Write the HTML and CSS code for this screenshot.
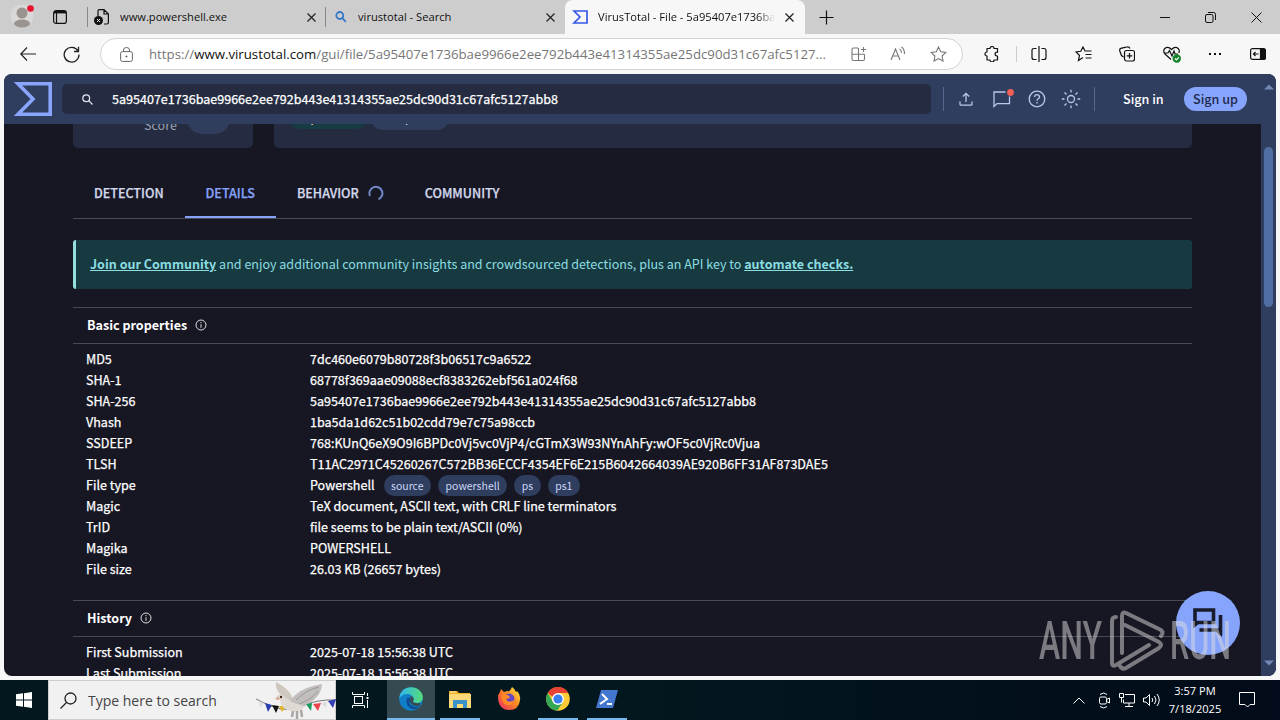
FILE: index.html
```html
<!DOCTYPE html>
<html lang="en">
<head>
<meta charset="utf-8">
<title>VirusTotal - File</title>
<link rel="stylesheet" href="styles.css">
</head>
<body>
<div class="tabbar">
  <svg class="avatar" width="24" height="24" viewBox="0 0 24 24"><circle cx="12" cy="11" r="11.500" fill="#d8d8d8"/><circle cx="12" cy="8" r="5.500" fill="#999490"/><ellipse cx="12" cy="18.500" rx="8" ry="4" fill="#999490"/><circle cx="20.500" cy="3.500" r="3.300" fill="#e8112d"/></svg>
  <svg class="workspaces" width="14" height="14" viewBox="0 0 14 14" fill="none" stroke="#111"><rect x=".6" y=".6" width="12.800" height="12.800" rx="2.500" stroke-width="1.200"/><path d="M1 2.200h12" stroke-width="2.400"/><path d="M3.500 3v10" stroke-width="1.200"/></svg>
  <i class="sep"></i>
  <div class="tab tab-one">
    <svg width="16" height="16" viewBox="0 0 16 16" fill="none"><path d="M4 7V2q0-1.400 1.400-1.400H10L14.400 5v8.500q0 1.500-1.400 1.500h-3M10 1v4h4" stroke="#111" stroke-width="1.200"/><circle cx="4.500" cy="11.500" r="4.500" fill="#111"/><path d="M3 10l3 3M6 10l-3 3" stroke="#eee"/></svg>
    <span class="tab-title">www.powershell.exe</span>
    <svg class="close" width="9" height="9" viewBox="0 0 9 9"><path d="M.5.5l8 8M8.500.5l-8 8"/></svg>
  </div>
  <i class="sep"></i>
  <div class="tab tab-two">
    <svg width="12" height="12" viewBox="0 0 12 12" fill="none" stroke="#3579c8" stroke-width="1.800"><circle cx="4.800" cy="4.500" r="3.500"/><path d="M7.400 7.200l3.400 3.600"/></svg>
    <span class="tab-title">virustotal - Search</span>
    <svg class="close" width="9" height="9" viewBox="0 0 9 9"><path d="M.5.5l8 8M8.500.5l-8 8"/></svg>
  </div>
  <div class="tab tab-active">
    <svg width="16" height="14" viewBox="0 0 16 14" fill="none" stroke="#3558e8" stroke-width="1.700"><path d="M2 1h13v12H2l6-6z"/></svg>
    <span class="tab-title">VirusTotal - File - 5a95407e1736bae</span>
    <svg class="close" width="9" height="9" viewBox="0 0 9 9"><path d="M.5.5l8 8M8.500.5l-8 8"/></svg>
  </div>
  <svg class="new-tab" width="15" height="15" viewBox="0 0 15 15" stroke="#111" stroke-width="1.200"><path d="M7.500.5v14M.5 7.500h14"/></svg>
  <div class="win-buttons">
    <svg width="10" height="10" viewBox="0 0 10 10" stroke="#111"><path d="M0 5.500h10"/></svg>
    <svg width="11" height="11" viewBox="0 0 11 11" fill="none" stroke="#111"><rect x=".5" y="2.500" width="7.500" height="8" rx="1.500"/><path d="M3 .5h5.500q2 0 2 2V8"/></svg>
    <svg width="11" height="11" viewBox="0 0 11 11" stroke="#111"><path d="M.5.5l10 10M10.500.5l-10 10"/></svg>
  </div>
</div>

<div class="toolbar">
  <svg class="back" width="16" height="14" viewBox="0 0 16 14" fill="none" stroke="#222" stroke-width="1.200"><path d="M7 .5L.8 7 7 13.500M1 7h15"/></svg>
  <svg class="reload" width="17" height="17" viewBox="0 0 17 17" fill="none" stroke="#222" stroke-width="1.300"><path d="M15 5A7.400 7.400 0 1 0 16 8.500M15.500.8V5.500H11"/></svg>
  <div class="address">
    <svg class="lock" width="13" height="15" viewBox="0 0 13 15" fill="none" stroke="#666"><rect x=".6" y="4.600" width="11.800" height="9.800" rx="1.800"/><path d="M3.500 4.500V3q0-2.500 3-2.500t3 2.500v1.500"/><circle cx="6.500" cy="9.500" r=".6" fill="#444"/></svg>
    <span class="url">https://<b>www.virustotal.com</b>/gui/file/5a95407e1736bae9966e2ee792b443e41314355ae25dc90d31c67afc5127...</span>
    <svg class="addr-icon" width="16" height="16" viewBox="0 0 16 16" fill="none" stroke="#777" stroke-width="1.100"><path d="M7 2H2.500Q1 2 1 3.500V13q0 1.500 1.500 1.500H12q1.500 0 1.500-1.500V8.500M7.500 2v12.500M1 8.300h12.500M12.500 1v5M10 3.500h5"/></svg>
    <svg class="addr-icon" width="17" height="16" viewBox="0 0 17 16" fill="none" stroke="#777" stroke-width="1.100"><path d="M1 14L5.500 3l4.500 11M2.700 10h5.800M9.500 3q2 1 2 4M11.500 1q3 2 3 7"/></svg>
    <svg class="addr-icon" width="17" height="16" viewBox="0 0 17 16" fill="none" stroke="#777" stroke-width="1.100"><path d="M8.500 1l2.200 4.700 5.200.7-3.800 3.600.9 5.100-4.500-2.500L4 15.100l.9-5.100L1.100 6.400l5.200-.7z"/></svg>
  </div>
  <div class="tools">
    <svg width="16" height="16" viewBox="0 0 16 16"><path d="M6 2.500a2 2 0 0 1 4 0h3.500v3.700H13a1.900 1.900 0 0 0 0 3.800h.5v4H10a2 2 0 0 1-4 0H3v-4a2 2 0 0 1 0-4V2.500z" stroke-linejoin="round"/></svg>
    <i class="tool-sep"></i>
    <svg width="16" height="16" viewBox="0 0 16 16"><path d="M8 0v16M5.500 2.500H3Q1 2.500 1 4.500v7q0 2 2 2h2.500M10.500 2.500H13q2 0 2 2v7q0 2-2 2h-2.500"/></svg>
    <svg width="17" height="16" viewBox="0 0 17 16"><path d="M8 11.500L3.500 14.500l1-5L1 6l4.800-.7L8 1l2 4h6.500M10.500 8.500h6M10.500 12h6"/></svg>
    <svg width="16" height="16" viewBox="0 0 16 16"><rect x="5.500" y="4.500" width="10" height="10.500" rx="2"/><path d="M10.500 7v5.500M7.800 9.800h5.500M4.500 11L2.500 9.500.8 5q-.5-2 1-2.600L8 .9q2-.6 3 1.600"/></svg>
    <svg width="18" height="17" viewBox="0 0 18 17"><path d="M8 13.500L2 8Q-.5 5 1.800 2.500 5-.2 8.500 3.500 12-.2 15.200 2.500 17 4.500 15.800 7M1 7h4l1.500-2.500L9 10l2-5 1 3h3"/><circle cx="13.800" cy="12.500" r="4.200" fill="#13832b" stroke="none"/><path d="M11.900 12.500l1.500 1.400 2.400-2.600" stroke="#fff"/></svg>
    <svg width="14" height="4" viewBox="0 0 14 4"><path d="M1 2h2M6 2h2M11 2h2" stroke-width="2"/></svg>
    <svg width="16" height="12" viewBox="0 0 16 12"><rect x=".6" y=".6" width="14.800" height="10.800" rx="2"/><path d="M10.500 1H14q1.500 0 1.500 2v6q0 2-1.500 2h-3.500z" fill="#111"/><path d="M8.500 6h-5M5.500 4l-2 2 2 2"/></svg>
  </div>
</div>

<div class="page">
  <div class="view">
    <header class="vt-header">
      <svg class="vt-logo" width="38" height="34" viewBox="0 0 38 34" fill="none" stroke="#8aa5fd" stroke-width="3.600"><path d="M4 1.800H36.200v30.400H4L19 17z"/></svg>
      <div class="vt-search">
        <svg width="11" height="11" viewBox="0 0 11 11" fill="none" stroke="#e3e8f5" stroke-width="1.200"><circle cx="4.200" cy="4.200" r="3.400"/><path d="M6.700 6.700l3.800 3.800"/></svg>
        <span>5a95407e1736bae9966e2ee792b443e41314355ae25dc90d31c67afc5127abb8</span>
      </div>
      <div class="vt-tools">
        <i></i>
        <svg width="14" height="14" viewBox="0 0 14 14"><path d="M1 9.500v2.700q0 1 1 1h10q1 0 1-1V9.500M7 10V1.500M3.800 4.500L7 1.300l3.200 3.200"/></svg>
        <svg class="comments" width="22" height="20" viewBox="0 0 22 20"><path d="M13.500 3H2v14.500L5 14.600h12.500V7.500"/><circle cx="18.500" cy="3.500" r="3.400" fill="#ee5f55" stroke="none"/></svg>
        <svg width="18" height="18" viewBox="0 0 18 18"><circle cx="9" cy="9" r="7.800"/><path d="M6.500 7q.2-2.300 2.500-2.300T11.500 7q0 1.200-1.500 2-1 .6-1 1.700M9 12v1.500"/></svg>
        <svg width="20" height="20" viewBox="0 0 20 20"><circle cx="10" cy="10" r="3.500"/><path d="M10 .8v2.700M10 16.500v2.700M.8 10h2.700M16.500 10h2.700M3.500 3.500l2 2M14.500 14.500l2 2M16.500 3.500l-2 2M5.500 14.500l-2 2"/></svg>
        <i class="last"></i>
      </div>
      <a class="sign-in">Sign in</a>
      <a class="sign-up">Sign up</a>
    </header>
    <main class="vt-main">
      <div class="panels">
        <div class="panel score"><span>Score</span><i></i></div>
        <div class="panel tags"><span class="tag-teal">spreader</span><span>ext-patch</span></div>
      </div>
      <nav class="vt-tabs">
        <a>DETECTION</a>
        <a class="active">DETAILS</a>
        <a>BEHAVIOR<svg width="16" height="16" viewBox="0 0 16 16" fill="none" stroke="#7187c7" stroke-width="2"><path d="M2 11a6.500 6.500 0 1 1 8.500 3.300"/></svg></a>
        <a>COMMUNITY</a>
      </nav>
      <div class="banner"><b>Join our Community</b> and enjoy additional community insights and crowdsourced detections, plus an API key to <b>automate checks.</b></div>
      <section class="props">
        <h2>Basic properties<svg width="12" height="12" viewBox="0 0 12 12"><circle cx="6" cy="6" r="5"/><path d="M6 5.300v3.500M6 3v1.200"/></svg></h2>
        <dl>
          <dt>MD5</dt><dd>7dc460e6079b80728f3b06517c9a6522</dd>
          <dt>SHA-1</dt><dd>68778f369aae09088ecf8383262ebf561a024f68</dd>
          <dt>SHA-256</dt><dd>5a95407e1736bae9966e2ee792b443e41314355ae25dc90d31c67afc5127abb8</dd>
          <dt>Vhash</dt><dd>1ba5da1d62c51b02cdd79e7c75a98ccb</dd>
          <dt>SSDEEP</dt><dd>768:KUnQ6eX9O9I6BPDc0Vj5vc0VjP4/cGTmX3W93NYnAhFy:wOF5c0VjRc0Vjua</dd>
          <dt>TLSH</dt><dd>T11AC2971C45260267C572BB36ECCF4354EF6E215B6042664039AE920B6FF31AF873DAE5</dd>
          <dt>File type</dt><dd class="types">Powershell<span>source</span><span>powershell</span><span>ps</span><span>ps1</span></dd>
          <dt>Magic</dt><dd>TeX document, ASCII text, with CRLF line terminators</dd>
          <dt>TrID</dt><dd>file seems to be plain text/ASCII (0%)</dd>
          <dt>Magika</dt><dd>POWERSHELL</dd>
          <dt>File size</dt><dd>26.03 KB (26657 bytes)</dd>
        </dl>
      </section>
      <section class="props history">
        <h2>History<svg width="12" height="12" viewBox="0 0 12 12"><circle cx="6" cy="6" r="5"/><path d="M6 5.300v3.500M6 3v1.200"/></svg></h2>
        <dl>
          <dt>First Submission</dt><dd>2025-07-18 15:56:38 UTC</dd>
          <dt>Last Submission</dt><dd>2025-07-18 15:56:38 UTC</dd>
        </dl>
      </section>
    </main>
  </div>
  <div class="scrollbar">
    <svg width="10" height="6" viewBox="0 0 10 6"><path d="M0 5.500L5 .5l5 5z" fill="#7288b4"/></svg>
    <i></i>
    <svg width="10" height="6" viewBox="0 0 10 6"><path d="M0 .5h10l-5 5z" fill="#7288b4"/></svg>
  </div>
  <div class="chat"><svg width="32" height="32" viewBox="0 0 32 32" fill="none" stroke="#171b2c" stroke-width="3.600"><path d="M3 3h18.500v12.500H3zM7.500 23H24M28.500 8v20"/><path d="M1.200 15v6.500l6-5z" fill="#171b2c" stroke="none"/><path d="M24 21.200h6V30l-6-5.200z" fill="#171b2c" stroke="none"/></svg></div>
</div>

<svg class="watermark" width="194" height="64" viewBox="0 0 194 64">
  <text x="0" y="51" textLength="63" lengthAdjust="spacingAndGlyphs">ANY</text>
  <text x="131" y="51" textLength="61" lengthAdjust="spacingAndGlyphs">RUN</text>
  <path d="M83 45V8q0-5 4-3L122 22q3 3 0 6M86 17l34 17q4 3 0 6L87 60q-4 2-6-2M77 9q-4 0-4 4v42q0 4 4 2l33-20"/>
</svg>

<div class="taskbar">
  <div class="start"><svg width="16" height="16" viewBox="0 0 16 16" fill="#fff"><path d="M0 2.300l7-1V7.600H0zM8 1.200L16 0v7.600H8zM0 8.500h7v6.300l-7-1zM8 8.500h8V16l-8-1.200z"/></svg></div>
  <div class="search">
    <svg width="17" height="17" viewBox="0 0 17 17" fill="none" stroke="#222" stroke-width="1.300"><circle cx="10.500" cy="6.500" r="5.500"/><path d="M6.500 10.500l-6 6"/></svg>
    <span>Type here to search</span>
    <svg class="dove" width="80" height="38" viewBox="0 0 80 38">
      <path d="M0 18Q28 34 44 26T80 19" fill="none" stroke="#777"/>
      <path d="M3 20l5 2-4 5z" fill="#ddd"/><path d="M9 22l7 2-4 7z" fill="#2b3caf"/><path d="M16 24l7 1-3 7z" fill="#111"/><path d="M23 25h7l-4 6z" fill="#e5b22f"/><path d="M50 23l6-1-1 8z" fill="#159a59"/><path d="M57 23l8-1-3 8z" fill="#e6434b"/><path d="M65 22l6-1-1 6z" fill="#ddd"/><path d="M72 20l8-2-3 9z" fill="#3440b5"/>
      <path d="M34 20Q18 12 20 1q13 6 17 17z" fill="#cfc8bf"/><path d="M34 21Q41 7 66 3 65 18 47 25z" fill="#c2bebd"/><path d="M40 19Q50 9 63 6M43 23Q55 19 62 10" fill="none" stroke="#9d9999"/>
      <path d="M19 18q2-6 7-4 4 2 9 8l14 3q-5 7-14 5-10-2-11-11l-5-1z" fill="#ded9d3"/><circle cx="25" cy="16" r="1.200" fill="#421"/><path d="M19 18l4-2v3z" fill="#d79a80"/><path d="M37 30l-1 6M41 30v8M45 29l1 7" stroke="#aaa5a2" stroke-width="2.500"/>
    </svg>
  </div>
  <div class="task-view"><svg width="17" height="16" viewBox="0 0 17 16" fill="none" stroke="#fff"><rect x="2.500" y="4.500" width="8" height="7"/><path d="M.5 0v2.500h12V0M.5 16v-2.500h12V16M15.500 1v3M15.500 8v8"/><rect x="14.500" y="5" width="2" height="2" fill="#fff" stroke="none"/></svg></div>
  <div class="app current"><svg width="24" height="24" viewBox="0 0 24 24"><defs><linearGradient id="e1"><stop stop-color="#2eb5ee"/><stop offset="1" stop-color="#55dc78"/></linearGradient></defs><circle cx="12" cy="12" r="11.800" fill="#117ec8"/><path d="M.2 11.500C1 4 6 .2 12 .2c7 0 12 5 11.800 10.300-.2 5-4.800 6.500-8.800 5-2-.8-.5-1.800-.5-3C14.500 6 4.500 5 .2 11.500z" fill="url(#e1)"/><path d="M8.500 10.500q-3 6 2 10 5 4 10-1-4 1.500-8-1-3-2-1.500-5 .5-2-1-3z" fill="#104d93"/><path d="M11.500 9q4 1 3 4-1.500 1.500.5 2.500 3 1.500 6 .3L21 19q-9 1-10-5z" fill="#354b51"/></svg></div>
  <div class="app"><svg width="22" height="20" viewBox="0 0 22 20"><path d="M0 2h8l2 2h11v15H0z" fill="#f0af27"/><path d="M0 5h22v14H0z" fill="#fbd978"/><path d="M4 19v-8h14v8h-4v-4H8v4z" fill="#3b91cb"/><path d="M1 3h6" stroke="#fff0b5"/></svg></div>
  <div class="app idle"><svg width="24" height="24" viewBox="0 0 24 24"><defs><linearGradient id="f1" x1="1" x2="0" y2="1"><stop stop-color="#fff04b"/><stop offset=".45" stop-color="#ff8b20"/><stop offset="1" stop-color="#eb2467"/></linearGradient></defs><path d="M1 11q0-4 2-6l1-3 3 3 3-1q2-1 1 1 3-2 4-5 3 2 4 5l1-1q4 4 3 9-1 10-11 10Q2 23 1 11z" fill="url(#f1)"/><circle cx="12" cy="12" r="5.500" fill="#6745c7"/><path d="M5 8q5-2 8 2-1 2-4 2 2 5 8 1-1 6-7 5-6-2-5-10z" fill="#ff8b22"/></svg></div>
  <div class="app"><svg width="24" height="24" viewBox="0 0 24 24"><circle cx="12" cy="12" r="11.800" fill="#ffcc35"/><path d="M1.700 6A11.800 11.800 0 0 1 22.300 6H12v8z" fill="#e84335"/><path d="M1.700 6A11.800 11.800 0 0 0 11 23.700l6.500-9L7 15z" fill="#34a853"/><circle cx="12" cy="12" r="6" fill="#fff"/><circle cx="12" cy="12" r="4.600" fill="#397ff0"/></svg></div>
  <div class="app"><svg width="22" height="18" viewBox="0 0 22 18"><path d="M5 0h17l-5 18H0z" fill="#4276cf"/><path d="M6 4l5 5-7 5M11 14h5" fill="none" stroke="#fff" stroke-width="2"/></svg></div>
  <div class="tray">
    <svg class="chevron" width="12" height="7" viewBox="0 0 12 7"><path d="M.5 6.500L6 1l5.500 5.500"/></svg>
    <svg class="camera" width="12" height="17" viewBox="0 0 12 17"><rect x="1.500" y="5" width="7" height="7" rx="1.500"/><path d="M8.500 7.500L11.500 6v5l-3-1.500M2 2.500q4-3 7 0M2 14.500q4 3 7 0"/></svg>
    <svg width="16" height="14" viewBox="0 0 16 14"><path d="M6 1.500h9.500v8.500H4.500V6.500M10 10v3M6 13.500h8M.5.5h4v4h-4zM2.500 4.500v5"/></svg>
    <svg width="17" height="14" viewBox="0 0 17 14"><path d="M.5 5h2.500L6.500 1.500v11L3 9H.5zM9 5q1.500 2 0 4M11.500 3q3 4 0 8M14 1q4.500 6 0 12"/></svg>
    <div class="clock"><span>3:57 PM</span><span>7/18/2025</span></div>
    <svg class="notes" width="16" height="16" viewBox="0 0 16 16"><path d="M.5.500h15v12H11L8.500 15 6 12.500H.5z"/></svg>
  </div>
</div>
</body>
</html>
```
FILE: styles.css
```css
* { box-sizing: border-box; }
body { margin: 0; width: 1280px; height: 720px; overflow: hidden; display: flex; flex-direction: column; background: #f7f7f7; font-family: "Open Sans", sans-serif; color: #111; }
svg { display: block; flex: none; }
.tabbar { height: 34px; flex: none; display: flex; align-items: center; background: #cdcdcd; font-size: 11.15px; }
.avatar { margin-left: 10px; }
.workspaces { margin: 0 20px 0 19px; }
.sep { width: 1px; height: 20px; background: #888; }
.tab { display: flex; align-items: center; height: 34px; }
.tab-title { white-space: nowrap; overflow: hidden; flex: 1; padding-bottom: 2px; }
.close { fill: none; stroke: #222; stroke-width: 1.2; }
.tab-one { width: 237px; padding: 0 9px 0 6px; gap: 10px; }
.tab-two { width: 239px; padding: 0 10px 0 9px; gap: 11px; }
.tab-active { width: 240px; padding: 0 11px 0 7px; gap: 10px; background: #f7f7f7; border-radius: 8px 8px 0 0; }
.tab-active .tab-title { -webkit-mask-image: linear-gradient(90deg, #000 90%, transparent); mask-image: linear-gradient(90deg, #000 90%, transparent); }
.new-tab { margin-left: 14px; }
.win-buttons { margin-left: auto; padding-right: 18px; display: flex; align-items: center; gap: 35px; }
.toolbar { height: 40px; flex: none; display: flex; align-items: center; }
.back { margin-left: 20px; }
.reload { margin-left: 27px; }
.address { width: 863px; height: 32px; margin-left: 20px; padding: 0 0 0 19px; display: flex; align-items: center; background: #fff; border: 1px solid #d3d3d3; border-radius: 16px; }
.url { margin-left: 16px; width: 684px; font-size: 13.24px; color: #767676; white-space: nowrap; }
.url b { font-weight: 400; color: #111; }
.addr-icon { margin-left: 23px; }
.url + .addr-icon { margin-left: 18px; }
.tools { margin-left: 21px; display: flex; align-items: center; gap: 27.5px; }
.tools svg { fill: none; stroke: #111; stroke-width: 1.2; }
.tool-sep { width: 1px; height: 16px; margin: 0 -13px 0 -12px; background: #ccc; }
.page { position: relative; height: 602px; margin: 0 4px; flex: none; display: flex; overflow: hidden; border-radius: 8px; background: #171723; font-family: "Noto Sans CJK SC", sans-serif; font-size: 12.55px; }
.view { width: 1257px; display: flex; flex-direction: column; }
.vt-header { height: 50px; flex: none; display: flex; align-items: center; background: #2f3d5f; color: #fff; }
.vt-logo { margin-left: 10px; }
.vt-search { width: 869px; height: 30px; margin-left: 10px; padding-left: 20px; display: flex; align-items: center; gap: 19px; border-radius: 5px; background: #252c42; -webkit-text-stroke: .25px #fff; }
.vt-search span { padding-bottom: 2px; }
.vt-tools { width: 153px; margin-left: 12px; margin-right: -1px; display: flex; align-items: center; gap: 15px; }
.vt-tools svg { fill: none; stroke: #b9c8ee; stroke-width: 1.3; }
.vt-tools i { width: 1px; height: 24px; background: #56688f; }
.vt-tools .comments { margin-left: 4px; margin-right: -1px; }
.vt-tools .last { margin-left: -2px; }
.sign-in { margin-left: 28px; padding-bottom: 2px; width: 61px; font-weight: 500; }
.sign-up { width: 63px; height: 24px; line-height: 24px; border-radius: 12px; background: #87a4fc; color: #20294c; text-align: center; font-weight: 500; }
.vt-main { flex: 1; min-height: 0; overflow: hidden; padding: 0 69px; color: #fff; }
.panels { display: flex; gap: 21px; height: 34px; margin-top: -10px; }
.panel { height: 34px; background: #252b40; border-radius: 5px; }
.score { width: 180px; padding-left: 71px; display: flex; gap: 10px; color: #9ba2b5; line-height: 22px; }
.score i { width: 43px; height: 30px; margin-top: -10px; border-radius: 15px; background: #303d5d; }
.tags { flex: 1; padding-left: 16px; display: flex; align-items: flex-start; gap: 6px; font-size: 11px; line-height: 15px; }
.tags span { width: 76px; height: 20px; margin-top: -4px; border-radius: 10px; text-align: center; background: #303d5d; }
.tags .tag-teal { height: 19px; background: #173d42; }
.vt-tabs { display: flex; height: 48px; margin-top: 23px; border-bottom: 1px solid #474954; color: #d3d9ec; font-weight: 500; -webkit-text-stroke: .25px currentColor; }
.vt-tabs a { height: 47px; padding: 0 21px; line-height: 43px; display: flex; gap: 9px; }
.vt-tabs svg { margin: 14px -1px 0 0; }
.vt-tabs .active { color: #86a2f8; border-bottom: 2px solid #86a2f8; }
.banner { height: 49px; margin-top: 21px; padding-left: 14px; border-left: 3px solid #94dfdf; border-radius: 3px; font-size: 12.54px; line-height: 48px; background: #173a40; color: #8bdde0; white-space: nowrap; }
.banner b { text-decoration: underline; }
.props { margin-top: 18px; }
.props h2 { height: 37px; margin: 0; padding: 0 0 0 14px; line-height: 33px; display: flex; align-items: flex-start; gap: 8px; border: solid #474954; border-width: 1px 0; font-size: 12.55px; font-weight: 700; }
.props h2 svg { margin-top: 11px; fill: none; stroke: #ddd; }
.props dl { margin: 4px 0 0; padding-left: 13px; display: grid; grid-template-columns: 224px 1fr; grid-auto-rows: 21px; line-height: 21px; -webkit-text-stroke: .25px #fff; }
.props dd { margin: 0; white-space: nowrap; }
.history { margin-top: 21px; }
.types { display: flex; gap: 7px; }
.types span { margin-top: 1px; padding: 0 7.5px; height: 21px; border-radius: 11px; background: #2f3d5f; color: #cbd7f7; font-size: 10.5px; -webkit-text-stroke: 0; }
.types span:first-child { margin-left: 2px; }
.scrollbar { width: 15px; padding: 10px 0; display: flex; flex-direction: column; align-items: center; background: #2f3d5f; }
.scrollbar i { width: 9px; height: 160px; margin: 57px 0 auto; border-radius: 5px; background: #506ea2; }
.chat { position: absolute; left: 1172px; top: 517px; width: 64px; height: 64px; border-radius: 50%; background: #87a4fc; display: grid; place-items: center; }
.watermark { position: absolute; left: 1039px; top: 608px; opacity: .5; }
.watermark text { font-family: Roboto, sans-serif; font-size: 53px; font-weight: 500; fill: #ddd; }
.watermark path { fill: none; stroke: #ddd; stroke-width: 4; stroke-linejoin: round; stroke-linecap: round; }
.taskbar { height: 40px; margin-top: 4px; flex: none; display: flex; background: linear-gradient(90deg, #03171f 0 50%, #020b19); color: #fff; }
.start { width: 48px; display: grid; place-items: center; }
.search { width: 288px; height: 40px; padding-left: 11px; display: flex; align-items: center; background: #f1f1f1; border: 1px solid #ccc; color: #444; font-size: 14px; }
.search span { width: 128px; margin-left: 11px; white-space: nowrap; }
.dove { margin-left: 40px; }
.task-view { width: 51px; padding-right: 3px; display: grid; place-items: center; }
.app { width: 40px; height: 40px; margin-right: 9px; display: grid; place-items: center; border-bottom: 2px solid #76b9ed; }
.app.current { width: 48px; margin-right: 5px; background: #354b51; }
.app.idle { border-color: transparent; }
.tray { margin-left: auto; padding-right: 25px; display: flex; align-items: center; gap: 8px; }
.tray svg { fill: none; stroke: #fff; }
.tray .chevron { margin-right: 5px; }
.tray .camera { margin-right: 1px; }
.clock { width: 66px; display: flex; flex-direction: column; align-items: center; font-size: 11.1px; line-height: 18px; margin-left: -6px; }
.notes { margin-left: 3px; }
```
